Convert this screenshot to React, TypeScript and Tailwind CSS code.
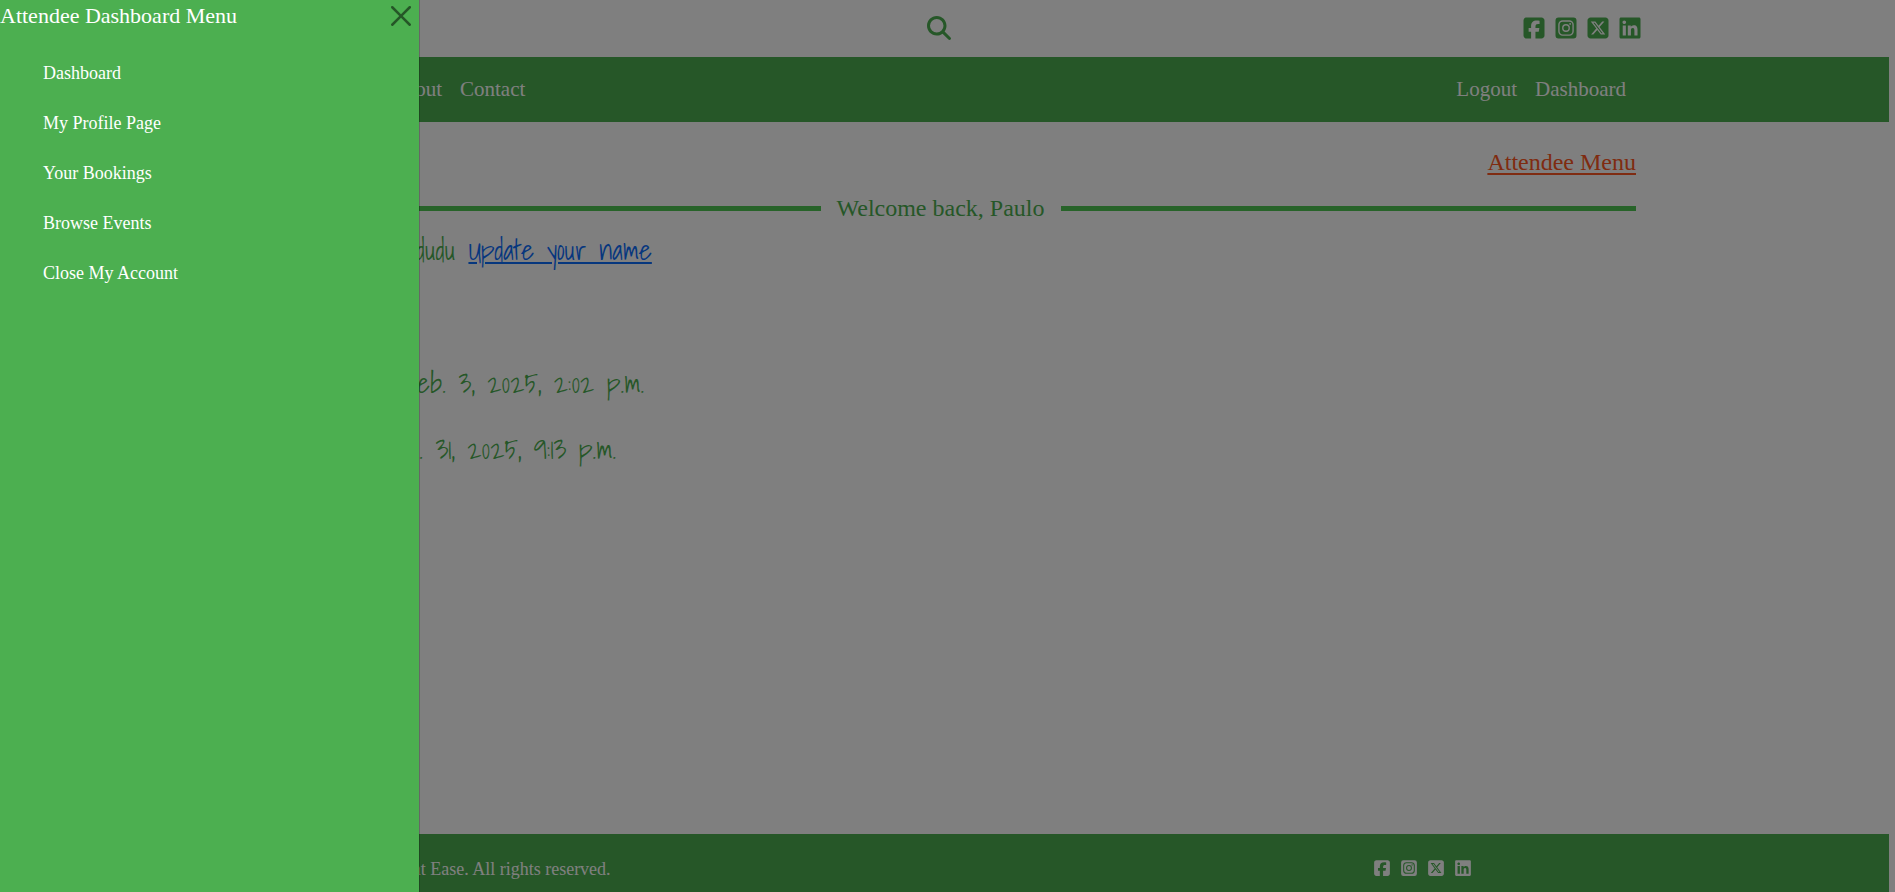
import { FaSquareFacebook, FaSquareXTwitter, FaLinkedin, FaMagnifyingGlass } from "react-icons/fa6";

function InstagramIcon() {
  return (
    <svg viewBox="0 0 448 512" width="1em" height="1em" fill="currentColor" fillRule="evenodd">
      <path d="M64 32h320a64 64 0 0 1 64 64v320a64 64 0 0 1-64 64H64a64 64 0 0 1-64-64V96a64 64 0 0 1 64-64zM154 90h140a96 96 0 0 1 96 96v140a96 96 0 0 1-96 96H154a96 96 0 0 1-96-96V186a96 96 0 0 1 96-96zM154 120h140a66 66 0 0 1 66 66v140a66 66 0 0 1-66 66H154a66 66 0 0 1-66-66V186a66 66 0 0 1 66-66zM140 256a84 84 0 1 0 168 0a84 84 0 1 0-168 0zM170 256a54 54 0 1 0 108 0a54 54 0 1 0-108 0zM292 168a20 20 0 1 0 40 0a20 20 0 1 0-40 0z" />
    </svg>
  );
}

const socials = [
  { name: "Facebook", Icon: FaSquareFacebook },
  { name: "Instagram", Icon: InstagramIcon },
  { name: "X", Icon: FaSquareXTwitter },
  { name: "LinkedIn", Icon: FaLinkedin },
];

const menu = ["Dashboard", "My Profile Page", "Your Bookings", "Browse Events", "Close My Account"];

function Drawer() {
  return (
    <aside
      aria-label="Attendee Dashboard Menu"
      className="fixed inset-y-0 left-0 w-[420px] max-w-full border-r border-black/20 bg-[#4caf50] bg-clip-padding text-white"
    >
      <div className="flex items-center justify-between pr-2">
        <h2 className="text-[22px] leading-[26px]">Attendee Dashboard Menu</h2>
        <button type="button" aria-label="Close" className="py-[6px] text-black opacity-50">
          <svg viewBox="0 0 16 16" className="size-5" fill="currentColor">
            <path d="M.293.293a1 1 0 0 1 1.414 0L8 6.586 14.293.293a1 1 0 1 1 1.414 1.414L9.414 8l6.293 6.293a1 1 0 0 1-1.414 1.414L8 9.414l-6.293 6.293a1 1 0 0 1-1.414-1.414L6.586 8 .293 1.707a1 1 0 0 1 0-1.414z" />
          </svg>
        </button>
      </div>
      <ul className="mt-4 pl-[43px] text-lg leading-[50px]">
        {menu.map((item) => (
          <li key={item}>
            <a href="#">{item}</a>
          </li>
        ))}
      </ul>
    </aside>
  );
}

export default function App() {
  return (
    <div className="min-h-screen bg-white font-['Liberation_Serif',serif]">
      <div className="mr-[6px] flex min-h-screen flex-col">
        <header className="grid h-[57px] grid-cols-3 items-center pr-[247px] pb-[2px] pl-[235px]">
          <a href="#" className="text-2xl text-[#4caf50]">Event Ease</a>
          <button type="button" aria-label="Search" className="justify-self-center text-2xl text-[#4caf50]">
            <FaMagnifyingGlass />
          </button>
          <div className="flex gap-2 justify-self-end text-2xl text-[#4caf50]">
            {socials.map(({ name, Icon }) => (
              <a key={name} href="#" aria-label={name}>
                <Icon />
              </a>
            ))}
          </div>
        </header>
        <nav className="flex h-[65px] items-center justify-between bg-[#4caf50] pr-[263px] pl-[245px] text-[21px] text-white">
          <div className="flex gap-[18px]">
            <a href="#">Home</a>
            <a href="#">Events</a>
            <a href="#">About</a>
            <a href="#">Contact</a>
          </div>
          <div className="flex gap-[18px]">
            <a href="#">Logout</a>
            <a href="#">Dashboard</a>
          </div>
        </nav>
        <main className="grow pt-[22px] pr-[253px] pl-[245px]">
          <div className="text-right text-2xl leading-9">
            <a href="#" className="text-[#ff5722] underline decoration-2 underline-offset-[3px]">Attendee Menu</a>
          </div>
          <h1 className="mt-[10px] flex items-center gap-4 text-2xl leading-9 text-[#4caf50] before:h-[5px] before:grow before:bg-[#4fc653] after:h-[5px] after:grow after:bg-[#4fc653]">
            Welcome back, Paulo
          </h1>
          <div className="font-['Shadows_Into_Light',cursive] text-[28px] leading-[66px] text-[#4caf50]">
            <div className="flex leading-[48px]">
              <span className="w-[171px]">Your name:</span>
              <span>dudu</span>
              <a href="#" className="ml-[13px] text-[#0d6efd] underline decoration-2 underline-offset-2">Update your name</a>
            </div>
            <div className="mt-[76px] flex">
              <span className="w-[160px]">Last login:</span>
              <span>Feb. 3, 2025, 2:02 p.m.</span>
            </div>
            <div className="flex">
              <span className="w-[140px]">Joined:</span>
              <span>Jan. 31, 2025, 9:13 p.m.</span>
            </div>
          </div>
        </main>
        <footer className="flex h-[58px] items-center justify-between bg-[#4caf50] pt-3 pr-[417px] pl-[325px] text-lg text-white">
          <p>© 2025 Event Ease. All rights reserved.</p>
          <div className="flex gap-[9px] pb-[2px]">
            {socials.map(({ name, Icon }) => (
              <a key={name} href="#" aria-label={name}>
                <Icon />
              </a>
            ))}
          </div>
        </footer>
      </div>
      <div className="fixed inset-0 bg-black/50" />
      <Drawer />
    </div>
  );
}
